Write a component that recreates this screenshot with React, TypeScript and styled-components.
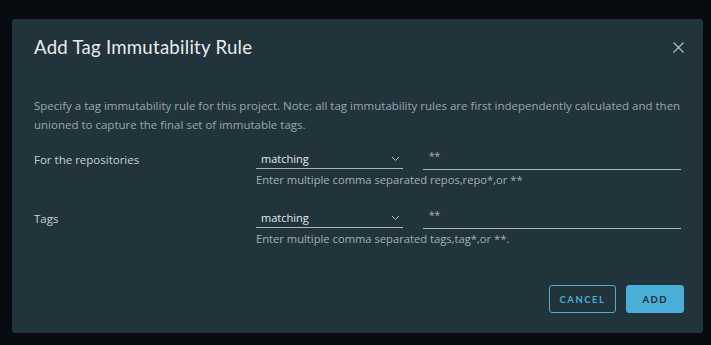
import React from "react";
import styled, { createGlobalStyle } from "styled-components";

const Global = createGlobalStyle`
  html, body { margin: 0; padding: 0; background: #080c10; }
  body { font-family: "Open Sans", "Liberation Sans", sans-serif; }
  * { box-sizing: border-box; }
`;

const Page = styled.div`
  width: 711px;
  height: 345px;
  padding: 19px 8px 12px 12px;
`;

const Modal = styled.div`
  width: 691px;
  height: 314px;
  background: #21333b;
  border-radius: 3px;
  padding: 0 22px;
  display: flex;
  flex-direction: column;
`;

const Header = styled.div`
  display: flex;
  align-items: center;
  justify-content: space-between;
  margin-top: 16px;
  height: 24px;
`;

const Title = styled.h3`
  margin: 0;
  font-family: "Lato", sans-serif;
  font-weight: 400;
  font-size: 18.6px;
  line-height: 24px;
  color: #e9ecef;
  letter-spacing: 0.25px;
`;

const Close = styled.button`
  border: 0;
  background: none;
  padding: 0;
  margin-right: -4px;
  width: 14px;
  height: 14px;
  display: flex;
  align-items: center;
  justify-content: center;
  cursor: pointer;
`;

const Desc = styled.p`
  margin: 37px 0 0;
  font-size: 11.5px;
  line-height: 19px;
  color: #9aa7ae;
`;

const Row = styled.div<{ $top: number }>`
  display: grid;
  grid-template-columns: 202px 147px 258px;
  column-gap: 20px;
  margin-top: ${(p) => p.$top}px;
`;

const Label = styled.div`
  font-size: 11.5px;
  line-height: 18px;
  color: #c7d1d6;
  padding-top: 2px;
`;

const Select = styled.div`
  height: 20px;
  border-bottom: 1px solid #a9b8bf;
  display: flex;
  align-items: center;
  justify-content: space-between;
  padding: 0 3px 0 5px;
  font-size: 11px;
  color: #e3e8eb;
`;

const Input = styled.div`
  height: 21px;
  border-bottom: 1px solid #a9b8bf;
  padding: 1px 6px 0;
  font-size: 10px;
  line-height: 12px;
  color: #a9b6bc;
`;

const Helper = styled.div`
  grid-column: 2 / 4;
  font-size: 11.2px;
  line-height: 16px;
  color: #a3b1b8;
  padding-top: 2px;
`;

const Footer = styled.div`
  margin-top: auto;
  margin-bottom: 20px;
  display: flex;
  justify-content: flex-end;
  gap: 10px;
  margin-right: -3px;
`;

const Button = styled.button<{ $primary?: boolean }>`
  height: 28px;
  padding: 0 ${(p) => (p.$primary ? 15 : 10)}px;
  border-radius: 3px;
  border: 1px solid #49afd9;
  background: ${(p) => (p.$primary ? "#49afd9" : "transparent")};
  color: ${(p) => (p.$primary ? "#1b2a32" : "#49afd9")};
  font-family: "Lato", sans-serif;
  font-weight: 700;
  font-size: 9.5px;
  letter-spacing: 1.5px;
  text-transform: uppercase;
`;

const Chevron = () => (
  <svg width="9" height="6" viewBox="0 0 9 6">
    <path d="M1 1 L4.5 4.5 L8 1" fill="none" stroke="#b6c2c8" strokeWidth="1" />
  </svg>
);

export default function App() {
  return (
    <Page>
      <Global />
      <Modal>
        <Header>
          <Title>Add Tag Immutability Rule</Title>
          <Close aria-label="close">
            <svg width="11" height="11" viewBox="0 0 11 11">
              <path d="M0.5 0.5 L10.5 10.5 M10.5 0.5 L0.5 10.5" stroke="#adbbc4" strokeWidth="1.2" />
            </svg>
          </Close>
        </Header>
        <Desc>
          Specify a tag immutability rule for this project. Note: all tag immutability rules are first
          independently calculated and then unioned to capture the final set of immutable tags.
        </Desc>
        <Row $top={15}>
          <Label>For the repositories</Label>
          <Select>
            <span>matching</span>
            <Chevron />
          </Select>
          <Input>**</Input>
          <Label />
          <Helper>Enter multiple comma separated repos,repo*,or **</Helper>
        </Row>
        <Row $top={20}>
          <Label>Tags</Label>
          <Select>
            <span>matching</span>
            <Chevron />
          </Select>
          <Input>**</Input>
          <Label />
          <Helper>Enter multiple comma separated tags,tag*,or **.</Helper>
        </Row>
        <Footer>
          <Button>Cancel</Button>
          <Button $primary>Add</Button>
        </Footer>
      </Modal>
    </Page>
  );
}
